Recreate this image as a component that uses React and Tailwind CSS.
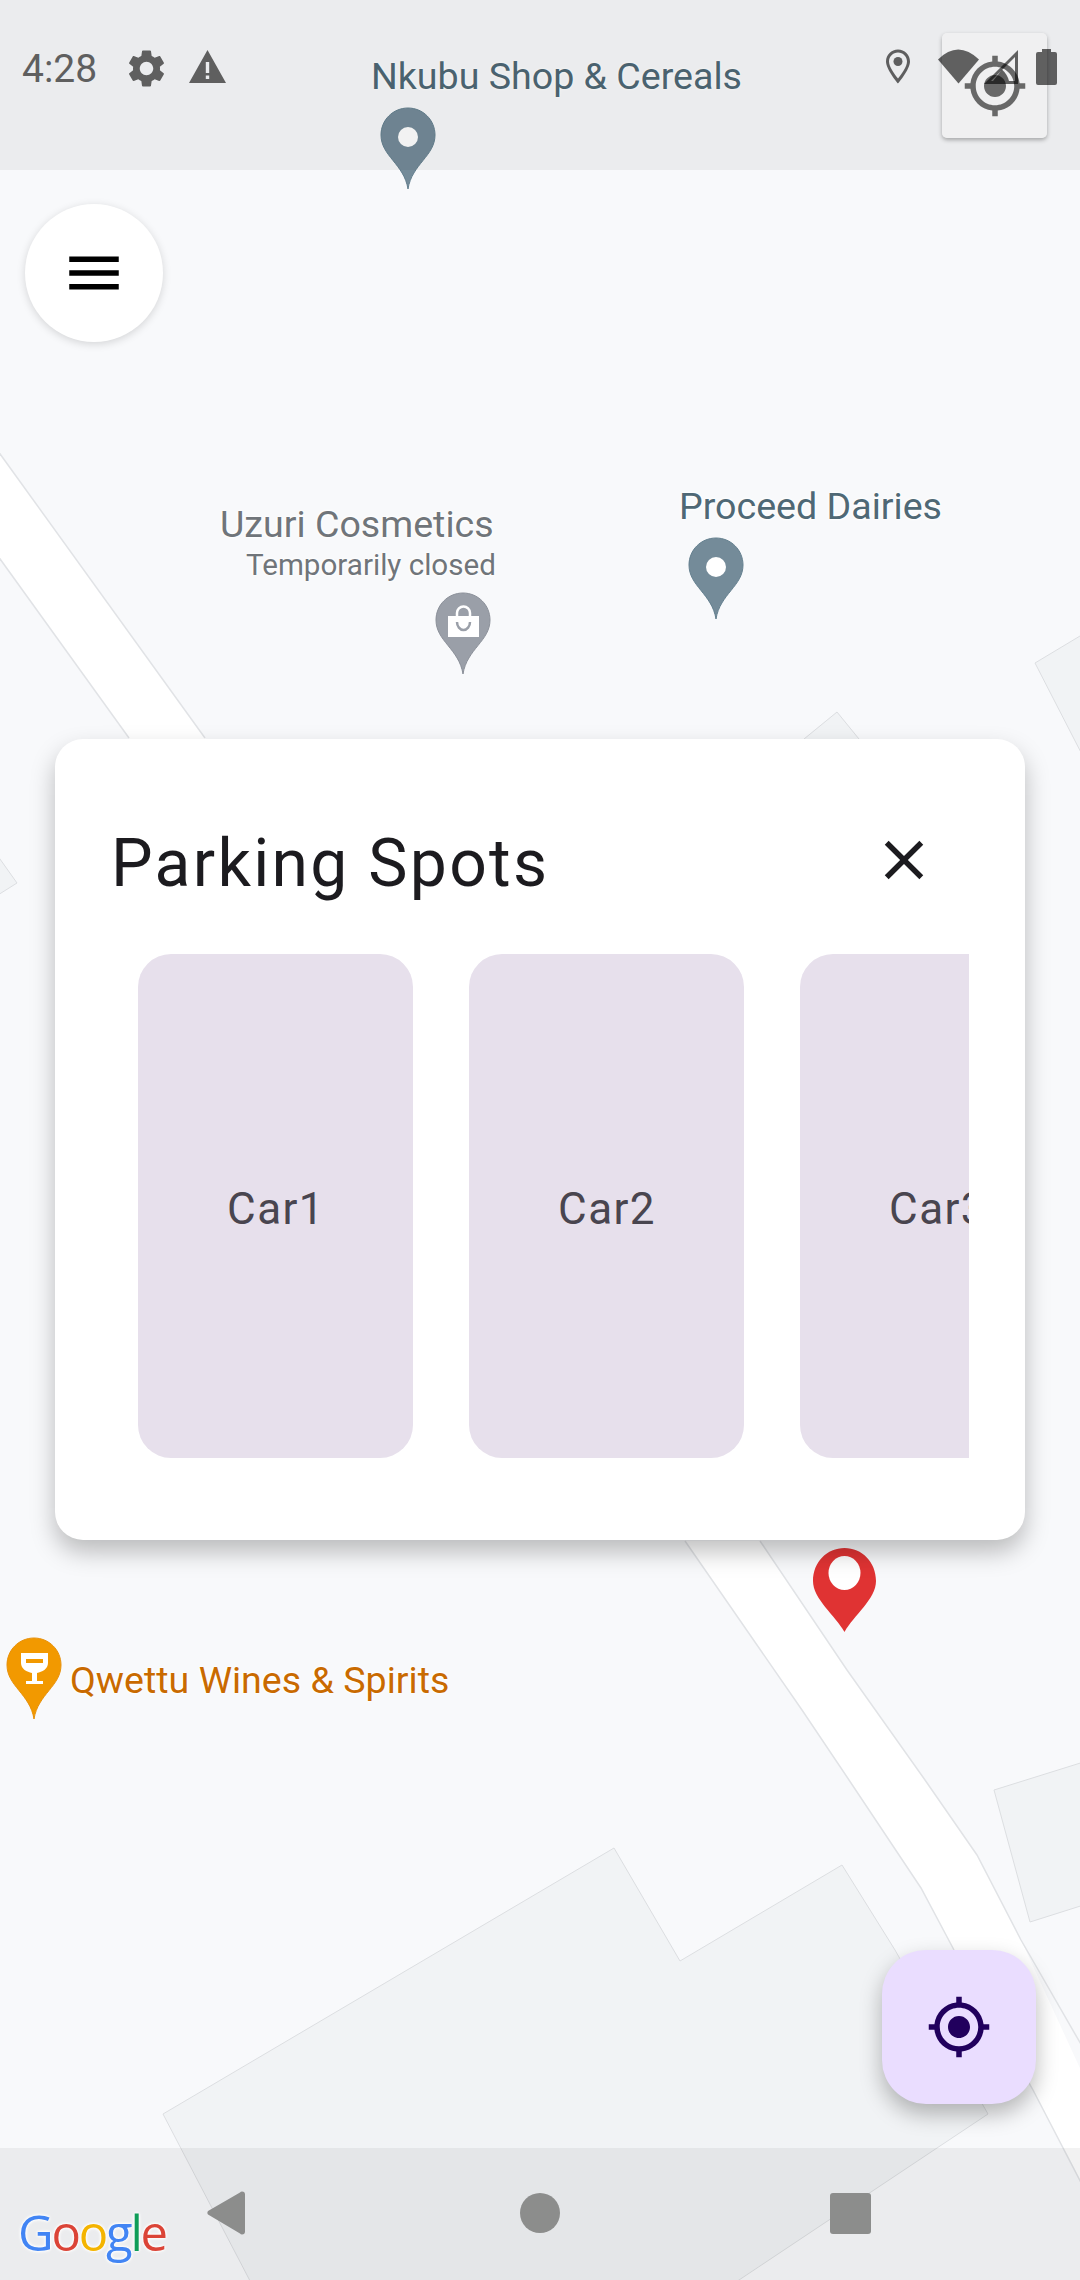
const font = "font-['Roboto','Liberation_Sans',sans-serif]"
const halo = '[text-shadow:0_0_3px_#fff,0_0_3px_#fff,0_0_4px_#fff]'

const pinShape = 'M27 0C12 0 0 12 0 27c0 21 23 29 27 54 4-25 27-33 27-54C54 12 42 0 27 0z'
const gpsFixed = 'M12 8c-2.21 0-4 1.79-4 4s1.79 4 4 4 4-1.79 4-4-1.79-4-4-4zm8.94 3c-.46-4.17-3.77-7.48-7.94-7.94V1h-2v2.06C6.83 3.52 3.52 6.83 3.06 11H1v2h2.06c.46 4.17 3.77 7.48 7.94 7.94V23h2v-2.06c4.17-.46 7.48-3.77 7.94-7.94H23v-2h-2.06zM12 19c-3.87 0-7-3.13-7-7s3.13-7 7-7 7 3.13 7 7-3.13 7-7 7z'
const gear = 'M19.14 12.94c.04-.3.06-.61.06-.94 0-.32-.02-.64-.07-.94l2.03-1.58c.18-.14.23-.41.12-.61l-1.92-3.32c-.12-.22-.37-.29-.59-.22l-2.39.96c-.5-.38-1.03-.7-1.62-.94l-.36-2.54c-.04-.24-.24-.41-.48-.41h-3.84c-.24 0-.43.17-.47.41l-.36 2.54c-.59.24-1.13.57-1.62.94l-2.39-.96c-.22-.08-.47 0-.59.22L2.74 8.87c-.12.21-.08.47.12.61l2.03 1.58c-.05.3-.09.63-.09.94s.02.64.07.94l-2.03 1.58c-.18.14-.23.41-.12.61l1.92 3.32c.12.22.37.29.59.22l2.39-.96c.5.38 1.03.7 1.62.94l.36 2.54c.05.24.24.41.48.41h3.84c.24 0 .44-.17.47-.41l.36-2.54c.59-.24 1.13-.56 1.62-.94l2.39.96c.22.08.47 0 .59-.22l1.92-3.32c.12-.22.07-.47-.12-.61l-2.01-1.58zM12 15.6c-1.98 0-3.6-1.62-3.6-3.6s1.62-3.6 3.6-3.6 3.6 1.62 3.6 3.6-1.62 3.6-3.6 3.6z'

function MapBase() {
  const edge = '#e1e3e6'
  return (
    <svg viewBox="0 0 1080 2280" className="absolute inset-0 w-[1080px] h-[2280px]">
      {/* buildings */}
      <g fill="#f1f3f5" stroke="#dcdee1" strokeWidth={1}>
        <path d="M163 2114L614 1848 680 1961 842 1865 895 1950 988 2114 709 2300 260 2300z" />
        <path d="M994 1790L1090 1760 1090 1903 1030 1922z" />
        <path d="M1035 663L1090 630 1090 770z" />
        <path d="M804 739L837 712 859 739 859 760 804 760z" />
        <path d="M-10 845L17 883 -10 900z" />
      </g>
      {/* road */}
      <path d="M-10 440L205 738 685 1541 760 1541 847 1670 925 1780 977 1855 1021 1940 1090 2090 1090 2200 1033 2090 954 1950 921 1888 849 1780 802 1710 685 1541 129 738-10 545z" fill="#fff" />
      <g fill="none" stroke={edge} strokeWidth={1.5}>
        <path d="M-10 440L205 738" />
        <path d="M-10 545L129 738" />
        <path d="M685 1541L802 1710 849 1780 921 1888 954 1950 1033 2090 1090 2200" />
        <path d="M760 1541L847 1670 925 1780 977 1855 1021 1940 1090 2060" />
      </g>
      {/* pins */}
      <g transform="translate(381 108)">
        <path d={pinShape} fill="#748b99" stroke="#64808f" strokeWidth={1} />
        <circle cx="27" cy="29" r="10" fill="#fff" />
      </g>
      <g transform="translate(689 538)">
        <path d={pinShape} fill="#748b99" stroke="#64808f" strokeWidth={1} />
        <circle cx="27" cy="29" r="10" fill="#fff" />
      </g>
      <g transform="translate(436 593)">
        <path d={pinShape} fill="#9a9fa8" stroke="#8b9099" strokeWidth={1} />
        <path d="M12 23h31v21H12z" fill="#fff" />
        <path d="M21 23v-3a6.500 6.500 0 0113 0v3" fill="none" stroke="#fff" strokeWidth={2.5} />
        <path d="M21 29a6.500 8 0 0013 0" fill="none" stroke="#9a9fa8" strokeWidth={2.5} />
      </g>
      <g transform="translate(7 1638)">
        <path d={pinShape} fill="#f29900" stroke="#e8910a" strokeWidth={1} />
        <path d="M14 15h27v10c0 6-6 9-11 10v8h6v3H19v-3h6v-8c-5-1-11-4-11-10z" fill="#fff" />
        <path d="M19 21h17v4H19z" fill="#f29900" />
      </g>
      <g transform="translate(813 1548)">
        <path d="M31.500 0C14 0 0 14 0 33c0 18 22 34 31.500 51C41 67 63 51 63 33 63 14 49 0 31.500 0z" fill="#e03333" />
        <ellipse cx="31.500" cy="25" rx="16" ry="17" fill="#fff" />
      </g>
    </svg>
  )
}

function MapLabel({ className, children }) {
  return <span className={`absolute whitespace-nowrap leading-none ${halo} ${className}`}>{children}</span>
}

function StatusIcons() {
  return (
    <div className="ml-auto mt-[1px] flex items-start text-black/60">
      <svg viewBox="0 0 24 34" className="w-[24px] h-[35px]" fill="currentColor">
        <path fillRule="evenodd" d="M12 0C5.400 0 0 5.200 0 12c0 8 12 22 12 22s12-14 12-22C24 5.200 18.600 0 12 0zm0 3c5 0 9 4 9 9 0 5-5.500 12.500-9 17-3.500-4.500-9-12-9-17 0-5 4-9 9-9z" />
        <circle cx="12" cy="12" r="4.500" />
      </svg>
      <svg viewBox="0 0 41 34" className="w-[41px] h-[35px] ml-[28px]" fill="currentColor">
        <path d="M0 10Q20-10 41 10L20.500 34z" />
      </svg>
      <svg viewBox="0 0 34 35" className="w-[34px] h-[35px] ml-[5px]" fill="currentColor">
        <path fillRule="evenodd" d="M34 1v34H0zM31 8L7 32h24z" />
        <path d="M9 32L18 20.500A23 23 0 0 1 25 32z" />
      </svg>
      <svg viewBox="0 0 21 36" className="w-[21px] h-[36px] ml-[18px]" fill="currentColor">
        <path d="M6 0h9v3h4a2 2 0 012 2v29a2 2 0 01-2 2H2a2 2 0 01-2-2V5a2 2 0 012-2h4z" />
      </svg>
    </div>
  )
}

function StatusBar() {
  return (
    <div className="h-[170px] bg-black/[0.05] flex items-start pt-[48px] pl-[22px] pr-[23px] text-[#5f5f5f]">
      <span className="text-[39px] leading-[42px] w-[102px]">4:28</span>
      <svg viewBox="0 0 24 24" className="w-[45px] h-[45px] -mt-[2px]" fill="currentColor"><path d={gear} /></svg>
      <svg viewBox="0 0 37 33" className="w-[37px] h-[33px] ml-[20px] mt-[2px]" fill="currentColor">
        <path fillRule="evenodd" d="M18.500 0L37 33H0zM16.800 12v11h3.400V12zm0 13.500V29h3.400v-3.500z" />
      </svg>
      <StatusIcons />
    </div>
  )
}

function NavBar() {
  return (
    <div className="relative h-[132px] bg-black/[0.05]">
      <div className={`absolute left-[18px] top-[56px] text-[49px] leading-[56px] font-medium tracking-[-2.2px] ${halo} font-['Open_Sans','Roboto',sans-serif]`}>
        <span className="text-[#4285f4]">G</span>
        <span className="text-[#db4437]">o</span>
        <span className="text-[#f4b400]">o</span>
        <span className="text-[#4285f4]">g</span>
        <span className="text-[#0f9d58]">l</span>
        <span className="text-[#db4437]">e</span>
      </div>
      <div className="flex items-center h-full pb-[2px] pl-[207px]">
        <svg viewBox="0 0 38 44" className="w-[38px] h-[44px]" fill="#8c8d8c">
          <path d="M35 0.500a3 3 0 013 3v37a3 3 0 01-3 3c-.8 0-1.500-.3-2-.9L1 23.500a3 3 0 010-3.500L33 1.400c.5-.5 1.200-.9 2-.9z" />
        </svg>
        <div className="w-[40px] h-[40px] rounded-full bg-[#8c8d8c] ml-[275px]" />
        <div className="w-[41px] h-[41px] rounded-[3px] bg-[#8c8d8c] ml-[270px]" />
      </div>
    </div>
  )
}

function CarCard({ name }) {
  return (
    <div className="w-[275px] h-[504px] shrink-0 rounded-[33px] bg-[#e7e0ec] flex items-center justify-center pt-[6px] pl-[1px] text-[44px] tracking-[1.4px] text-[#49454f]">
      {name}
    </div>
  )
}

function ParkingDialog() {
  return (
    <div className="absolute left-[55px] top-[739px] w-[970px] h-[801px] bg-white rounded-[28px] shadow-[0_12px_24px_rgba(0,0,0,0.25)] pt-[79px] pl-[57px] pr-[56px]">
      <div className="flex items-center justify-between h-[92px]">
        <h2 className="text-[66px] font-normal leading-[92px] tracking-[2.3px] -ml-[1px] text-[#1c1b1f]">Parking Spots</h2>
        <svg viewBox="0 0 24 24" className="w-[66px] h-[66px] mr-[32px] -mt-[8px]" fill="#1c1b1f">
          <path d="M19 6.410L17.590 5 12 10.590 6.410 5 5 6.410 10.590 12 5 17.590 6.410 19 12 13.410 17.590 19 19 17.590 13.410 12z" />
        </svg>
      </div>
      <div className="flex gap-[56px] pl-[26px] mt-[44px] overflow-hidden">
        <CarCard name="Car1" />
        <CarCard name="Car2" />
        <CarCard name="Car3" />
      </div>
    </div>
  )
}

export default function App() {
  return (
    <div className={`relative w-[1080px] h-[2280px] overflow-hidden bg-[#f8f9fb] ${font}`}>
      <MapBase />

      <MapLabel className="left-[371px] top-[58px] text-[37.6px] text-[#4f6875]">Nkubu Shop &amp; Cereals</MapLabel>
      <MapLabel className="left-[220px] top-[506px] text-[37.6px] text-[#70757a]">Uzuri Cosmetics</MapLabel>
      <MapLabel className="left-[246px] top-[551px] text-[29.6px] text-[#70757a]">Temporarily closed</MapLabel>
      <MapLabel className="left-[679px] top-[488px] text-[37.6px] text-[#4f6875]">Proceed Dairies</MapLabel>
      <MapLabel className="left-[70px] top-[1662px] text-[37.6px] text-[#c96a00]">Qwettu Wines &amp; Spirits</MapLabel>

      {/* map's own location button */}
      <div className="absolute left-[942px] top-[33px] w-[105px] h-[105px] rounded-[5px] bg-white/70 shadow-[0_2px_4px_rgba(0,0,0,0.3)] flex items-center justify-center">
        <svg viewBox="0 0 24 24" className="w-[66px] h-[66px]" fill="#6e6e6e">
          <path d={gpsFixed} />
        </svg>
      </div>

      <div className="absolute inset-0 flex flex-col justify-between">
        <StatusBar />
        <NavBar />
      </div>

      <button className="absolute left-[25px] top-[204px] w-[138px] h-[138px] rounded-full bg-white shadow-[0_2px_8px_rgba(0,0,0,0.15)] flex items-center justify-center">
        <svg viewBox="0 0 24 24" className="w-[66px] h-[66px]" fill="#000">
          <path d="M3 18h18v-2H3v2zm0-5h18v-2H3v2zm0-7v2h18V6H3z" />
        </svg>
      </button>

      <ParkingDialog />

      <button className="absolute left-[882px] top-[1950px] w-[154px] h-[154px] rounded-[44px] bg-[#eaddff] shadow-[0_10px_22px_rgba(0,0,0,0.28)] flex items-center justify-center">
        <svg viewBox="0 0 24 24" className="w-[66px] h-[66px]" fill="#21005d">
          <path d={gpsFixed} />
        </svg>
      </button>
    </div>
  )
}
